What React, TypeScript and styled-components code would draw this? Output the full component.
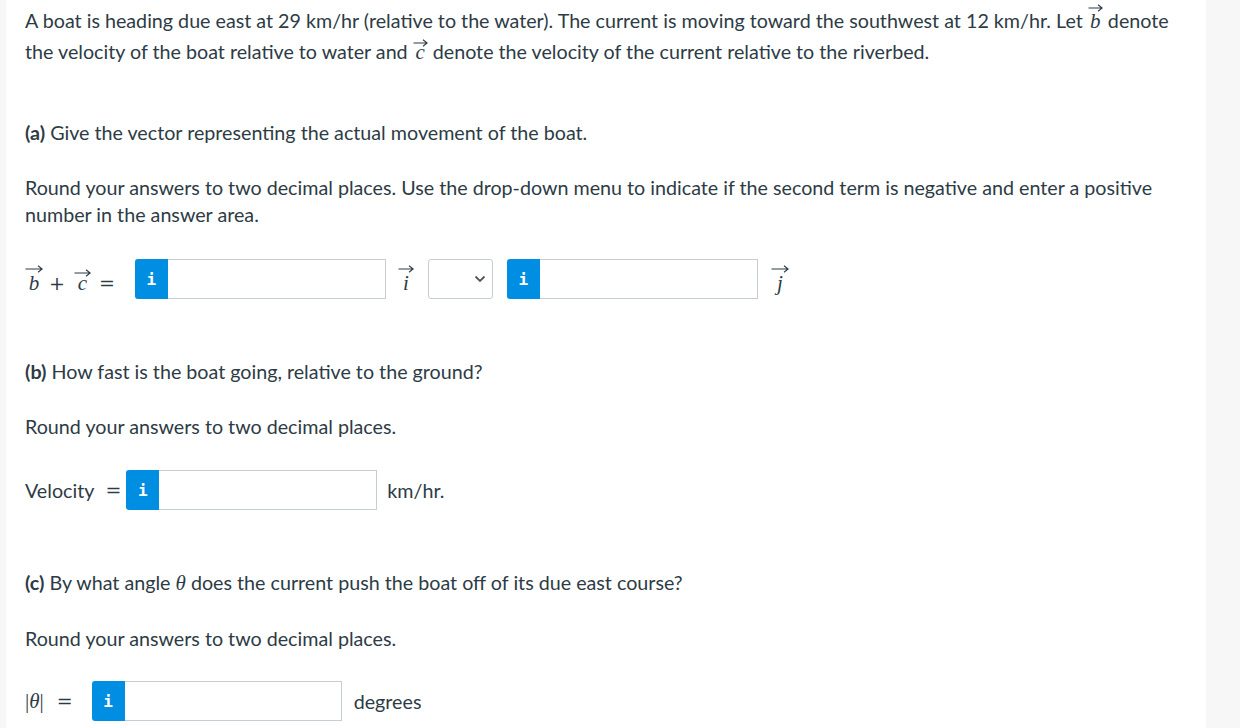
import React from "react";
import styled, { createGlobalStyle } from "styled-components";

const Global = createGlobalStyle`
  html, body { margin: 0; padding: 0; background: #f7f7f7; }
  body { font-family: Lato, "Noto Sans", sans-serif; color: #2d3b45; }
  * { box-sizing: border-box; }
`;

const Page = styled.div`
  display: flex;
  width: 1240px;
  height: 728px;
  overflow: hidden;
  background: #f7f7f7;
`;

const Panel = styled.main`
  margin-left: 6px;
  width: 1200px;
  background: #ffffff;
  padding: 4px 0 0 19px;
  display: flex;
  flex-direction: column;
`;

const Intro = styled.p`
  margin: 0;
  font-size: 19.7px;
  line-height: 31px;
  width: 1165px;
`;

const Part = styled.section<{ $top: number }>`
  margin-top: ${(p) => p.$top}px;
  display: flex;
  flex-direction: column;
`;

const Text = styled.p<{ $top?: number }>`
  margin: ${(p) => p.$top ?? 0}px 0 0 0;
  font-size: 19.7px;
  line-height: 27px;
  width: 1160px;
`;

const Label = styled.b`
  font-weight: 700;
`;

const Row = styled.div<{ $top: number }>`
  margin-top: ${(p) => p.$top}px;
  display: flex;
  align-items: center;
  height: 40px;
  font-size: 19.7px;
`;

const Math = styled.span<{ $ml?: number }>`
  margin-left: ${(p) => p.$ml ?? 0}px;
  font-family: "Liberation Serif", "DejaVu Serif", serif;
  font-size: 21px;
  display: inline-flex;
  align-items: baseline;
  white-space: nowrap;
`;

const VecWrap = styled.span<{ $ml: number }>`
  display: inline-block;
  margin-left: ${(p) => p.$ml}px;
  text-align: center;
  line-height: 1;
  vertical-align: baseline;
`;

const Arrow = styled.svg<{ $gap: number }>`
  display: block;
  margin: 0 auto ${(p) => p.$gap}px;
`;

const Letter = styled.i`
  font-family: "Liberation Serif", "DejaVu Serif", serif;
  font-style: italic;
  font-size: 21px;
`;

const Vec: React.FC<{ ch: string; w?: number; gap?: number; ml?: number }> = ({
  ch,
  w = 18,
  gap = 0,
  ml = 0,
}) => (
  <VecWrap $ml={ml}>
    <Arrow $gap={gap} width={w} height={8} viewBox={`0 0 ${w} 8`}>
      <path
        d={`M0.5 4 H${w - 1} M${w - 5} 0.8 L${w - 0.8} 4 L${w - 5} 7.2`}
        stroke="#2d3b45"
        strokeWidth="1.1"
        fill="none"
      />
    </Arrow>
    <Letter>{ch}</Letter>
  </VecWrap>
);

const Op = styled.span<{ $ml: number }>`
  font-family: "DejaVu Serif", "Liberation Serif", serif;
  font-size: 19px;
  margin-left: ${(p) => p.$ml}px;
`;

const Field = styled.div<{ $ml: number; $w: number }>`
  margin-left: ${(p) => p.$ml}px;
  display: flex;
  height: 40px;
  width: ${(p) => p.$w}px;
  flex-shrink: 0;
`;

const InfoBtn = styled.div`
  width: 33px;
  height: 40px;
  background: #008ee2;
  border-radius: 3px 0 0 3px;
  display: flex;
  align-items: center;
  justify-content: center;
  color: #ffffff;
  font-family: "DejaVu Sans Mono", monospace;
  font-weight: 700;
  font-size: 16px;
`;

const Input = styled.div`
  flex: 1;
  height: 40px;
  border: 1px solid #c7cdd1;
  border-left: none;
  background: #fff;
`;

const Select = styled.div`
  margin-left: 14px;
  width: 65px;
  height: 40px;
  border: 1px solid #c7cdd1;
  border-radius: 3px;
  display: flex;
  align-items: center;
  justify-content: flex-end;
  padding-right: 6px;
  flex-shrink: 0;
`;

const Unit = styled.span<{ $ml: number }>`
  margin-left: ${(p) => p.$ml}px;
  font-size: 19.7px;
`;

const Word = styled.span`
  font-size: 19.7px;
`;

const AnswerBox: React.FC<{ ml: number; w: number }> = ({ ml, w }) => (
  <Field $ml={ml} $w={w}>
    <InfoBtn>i</InfoBtn>
    <Input />
  </Field>
);

export default function App() {
  return (
    <Page>
      <Global />
      <Panel>
        <Intro>
          A boat is heading due east at 29 km/hr (relative to the water). The current is moving toward the
          southwest at 12 km/hr. Let <Vec ch="b" w={15} gap={-1} /> denote the velocity of the boat relative to
          water and <Vec ch="c" w={15} gap={-5} /> denote the velocity of the current relative to the riverbed.
        </Intro>

        <Part $top={52}>
          <Text>
            <Label>(a)</Label> Give the vector representing the actual movement of the boat.
          </Text>
          <Text $top={28}>
            Round your answers to two decimal places. Use the drop-down menu to indicate if the second term is
            negative and enter a positive number in the answer area.
          </Text>
          <Row $top={31}>
            <Math>
              <Vec ch="b" w={18} gap={0} />
              <Op $ml={6}>+</Op>
              <Vec ch="c" w={17} gap={-4} ml={9} />
              <Op $ml={8}>=</Op>
            </Math>
            <AnswerBox ml={20} w={251} />
            <Math $ml={12}>
              <Vec ch="i" w={16} gap={0} />
            </Math>
            <Select>
              <svg width="12" height="8" viewBox="0 0 12 8">
                <path d="M1.5 1.5 L6 6 L10.5 1.5" stroke="#555" strokeWidth="1.8" fill="none" />
              </svg>
            </Select>
            <AnswerBox ml={14} w={251} />
            <Math $ml={13}>
              <Vec ch="j" w={18} gap={0} />
            </Math>
          </Row>
        </Part>

        <Part $top={59}>
          <Text>
            <Label>(b)</Label> How fast is the boat going, relative to the ground?
          </Text>
          <Text $top={28}>Round your answers to two decimal places.</Text>
          <Row $top={30}>
            <Word>Velocity</Word>
            <Op $ml={11}>=</Op>
            <AnswerBox ml={5} w={251} />
            <Unit $ml={10}>km/hr.</Unit>
          </Row>
        </Part>

        <Part $top={59}>
          <Text>
            <Label>(c)</Label> By what angle <Letter>θ</Letter> does the current push the boat off of its due east
            course?
          </Text>
          <Text $top={28}>Round your answers to two decimal places.</Text>
          <Row $top={29}>
            <Math>
              |<Letter>θ</Letter>|<Op $ml={13}>=</Op>
            </Math>
            <AnswerBox ml={19} w={250} />
            <Unit $ml={12}>degrees</Unit>
          </Row>
        </Part>
      </Panel>
    </Page>
  );
}
